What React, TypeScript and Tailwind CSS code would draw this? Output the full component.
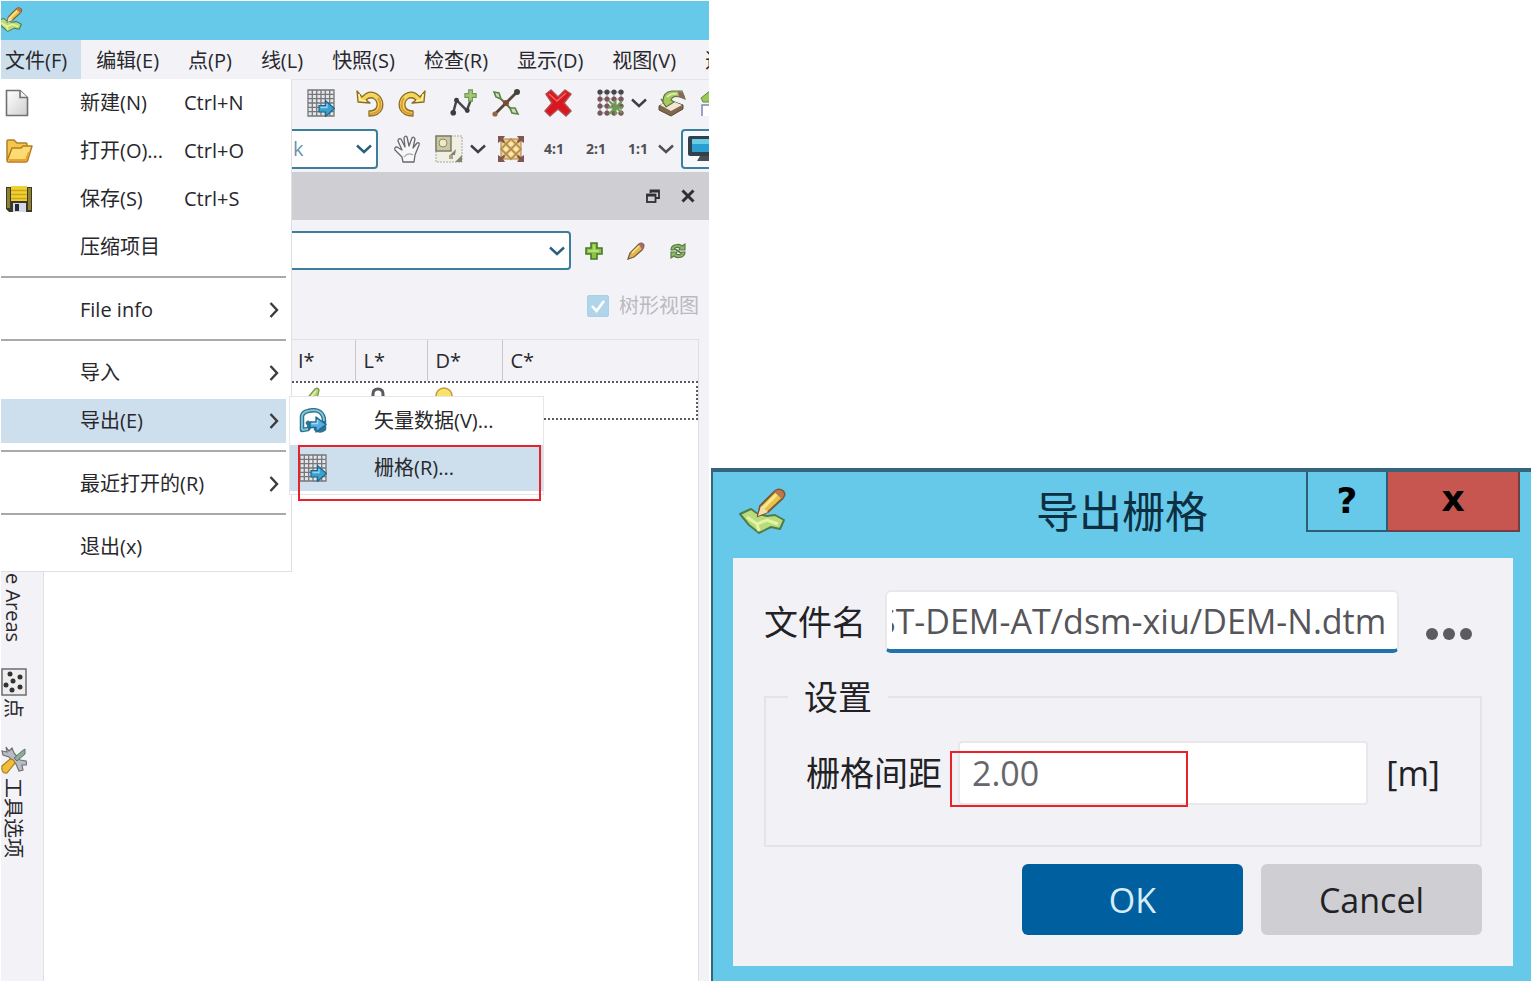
import { useCallback, useState, type ReactNode } from 'react';

type MenuEntry = {
  label: string;
  shortcut?: string;
  icon?: ReactNode;
  submenu?: boolean;
  active?: boolean;
};

const PencilMapIcon = ({ className }: { className?: string }) => (
  <svg viewBox="0 0 48 48" className={className} aria-hidden="true">
    <path d="M1 26 L12 21 L19 26 L28 28 L36 27 L45 32 L41 41 L32 39 L20 45 L10 37 Z" fill="#b9dc7c" stroke="#4f7c4c" strokeWidth="2" strokeLinejoin="round" />
    <path d="M8 29 L18 36 L28 32 L39 36 M20 43 L18 36" fill="none" stroke="#e6f2a4" strokeWidth="3" />
    <path d="M19 28 L21 18 L36 3 Q40 0 44 3 Q47 6 44 10 L29 24 Z" fill="#e9c24a" stroke="#7a5a36" strokeWidth="2" />
    <path d="M24 20 L38 6" stroke="#fae88e" strokeWidth="3" />
    <path d="M35 4 Q40 0 44 4 Q46 7 43 11 Z" fill="#bd7650" />
    <path d="M19 28 L22 18 L29 24 Z" fill="#f4dfae" />
  </svg>
);

const NewFileIcon = () => (
  <svg viewBox="0 0 24 28" className="h-7 w-6" aria-hidden="true">
    <defs>
      <linearGradient id="paper" x1="0" y1="0" x2="1" y2="1">
        <stop offset="0" stopColor="#ffffff" />
        <stop offset="1" stopColor="#cfcfcf" />
      </linearGradient>
    </defs>
    <path d="M1.5 1.5 H15 L22.5 8.5 V26.5 H1.5 Z" fill="url(#paper)" stroke="#707070" strokeWidth="1.6" />
    <path d="M15 1.5 V8.5 H22.5" fill="#f4f4f4" stroke="#707070" strokeWidth="1.6" />
  </svg>
);

const OpenIcon = () => (
  <svg viewBox="0 0 28 26" className="h-[26px] w-7" aria-hidden="true">
    <path d="M2 22 V3 Q2 2 3 2 H9 L12 5 H21 Q22 5 22 6 V10" fill="#f3c64e" stroke="#b0802a" strokeWidth="1.5" />
    <path d="M2 23 L7 10 H16 L18 8 H27 L22.5 23 Q22 24 21 24 H3 Z" fill="#fbdc74" stroke="#b87a1c" strokeWidth="1.5" strokeLinejoin="round" />
    <path d="M4 22 H21 L24 14" fill="none" stroke="#f0a030" strokeWidth="2" />
  </svg>
);

const SaveIcon = () => (
  <svg viewBox="0 0 28 28" className="size-7" aria-hidden="true">
    <path d="M1 2 H27 V27 H4 L1 24 Z" fill="#3c3a26" />
    <path d="M2 3 H5 V23 H2 Z M23 3 H26 V25 H23 Z" fill="#8e8232" />
    <rect x="6" y="1" width="16" height="15" fill="#f0d030" />
    <path d="M6 5.500 H22 M6 9.500 H22 M6 13.500 H22" stroke="#c9a51c" strokeWidth="1.300" />
    <rect x="8" y="18" width="13" height="9" fill="#d5dae8" />
    <rect x="10" y="19" width="4" height="7" fill="#26283a" />
  </svg>
);

const RasterIcon = ({ className }: { className?: string }) => (
  <svg viewBox="0 0 28 28" className={className} aria-hidden="true">
    <rect x="1" y="1" width="26" height="26" fill="#e4e7ea" />
    <path d="M1 1 H27 V27 H1 Z M5.300 1 V27 M9.700 1 V27 M14 1 V27 M18.300 1 V27 M22.700 1 V27 M1 5.300 H27 M1 9.700 H27 M1 14 H27 M1 18.300 H27 M1 22.700 H27" fill="none" stroke="#75777b" strokeWidth="1.300" />
    <path d="M12 16.500 H18.500 V11.500 L27.500 19.500 L18.500 27.500 V23 H12 Z" fill="#3d9fcb" stroke="#1c668c" strokeWidth="1.200" />
    <path d="M13.500 18.500 H20 V15" fill="none" stroke="#8ed4ec" strokeWidth="1.300" />
  </svg>
);

const VectorIcon = () => (
  <svg viewBox="0 0 28 26" className="h-[26px] w-7" aria-hidden="true">
    <path d="M3 22 L3 8 Q4 4 9 3 Q17 1 21 4 Q25 7 25 13 V21 Q21 24 17 21 M3 22 L9 21 Q12 18 9 15" fill="none" stroke="#2f7390" strokeWidth="4.500" strokeLinejoin="round" strokeLinecap="round" />
    <path d="M3 22 L3 8 Q4 4 9 3 Q17 1 21 4 Q25 7 25 13 M3 22 L9 21" fill="none" stroke="#86c6d8" strokeWidth="1.800" strokeLinejoin="round" />
    <path d="M11 14 H17 V9 L27 16.500 L17 24 V19.500 H11 Z" fill="#55aee2" stroke="#1f6792" strokeWidth="1.300" strokeLinejoin="round" />
    <path d="M12.500 15.500 H18.500 V12" fill="none" stroke="#a4dcf4" strokeWidth="1.300" />
  </svg>
);

const TurnIcon = ({ flip }: { flip?: boolean }) => (
  <svg viewBox="0 0 28 28" className={flip ? 'size-7 -scale-x-100' : 'size-7'} aria-hidden="true">
    <path d="M6 8 Q13 0 21 5 Q29 11 26 20 Q23 27 13 27 V22 Q20 22 21 17 Q22 12 17 9 Q13 8 10 11 L14 14 L2 13 L1 2 Z" fill="#f3d75c" stroke="#8b6c25" strokeWidth="1.300" strokeLinejoin="round" />
    <path d="M22 9 Q27 16 22 22 Q19 25 14 25" fill="none" stroke="#df9a34" strokeWidth="2" />
    <path d="M3 5 L4 11 L10 12" fill="none" stroke="#fff3a0" strokeWidth="1.500" />
  </svg>
);

const AddVertexIcon = () => (
  <svg viewBox="0 0 30 30" className="h-[30px] w-7" aria-hidden="true">
    <path d="M3.500 25 L7 12 L18 23 L23 10" fill="none" stroke="#45474b" strokeWidth="2.600" />
    <circle cx="3.500" cy="25.500" r="3" fill="#3b3c42" />
    <circle cx="7" cy="12" r="2.600" fill="#3b3c42" />
    <circle cx="18.500" cy="23" r="2.600" fill="#3b3c42" />
    <path d="M20 1 H24 V5 H28 V9 H24 V13 H20 V9 H16 V5 H20 Z" fill="#a5c878" stroke="#6f9652" strokeWidth="1.200" />
  </svg>
);

const CutIcon = () => (
  <svg viewBox="0 0 28 28" className="size-7" aria-hidden="true">
    <path d="M2 26 L25 3" stroke="#56453a" strokeWidth="2.800" />
    <path d="M9 10 L20 21" stroke="#5d7d40" strokeWidth="2.200" />
    <path d="M2 3 L7 4 L9 10 L4 8 Z M18 19 L23 19 L26 25 L20 24 Z" fill="#cfe0b8" stroke="#5b8344" strokeWidth="1.600" />
    <circle cx="14" cy="14" r="3" fill="#7a4c38" />
    <circle cx="25" cy="3" r="3" fill="#42433b" />
    <circle cx="3" cy="25" r="2.600" fill="#93664a" />
  </svg>
);

const DeleteIcon = () => (
  <svg viewBox="0 0 28 28" className="size-7" aria-hidden="true">
    <path d="M2 5 L7 1 L14 8 L21 1 L27 5 L20 14 L27 22 L22 27 L14 20 L6 27 L1 22 L8 14 Z" fill="#d81720" stroke="#b54a4c" strokeWidth="1.500" strokeLinejoin="round" />
    <path d="M5 5 L13 12 L22 4" fill="none" stroke="#f06a60" strokeWidth="1.600" />
  </svg>
);

const PointGridIcon = () => (
  <svg viewBox="0 0 28 28" className="size-7" aria-hidden="true">
    <path d="M1 3 H27 M1 10 H27 M1 17 H27 M1 24 H27 M3 1 V27 M10 1 V27 M17 1 V27 M24 1 V27" stroke="#a39799" strokeWidth="1.200" />
    {[3, 10, 17, 24].map((y) =>
      [3, 10, 17, 24].map((x) => <circle key={`${x}-${y}`} cx={x} cy={y} r="2.600" fill={y < 6 ? '#49454c' : '#79585c'} />),
    )}
    <path d="M12 12 L25 24 M25 12 L12 25 M18.500 11 V26 M11 18.500 H26" stroke="#6c9a50" strokeWidth="2" />
  </svg>
);

const LayersIcon = () => (
  <svg viewBox="0 0 28 28" className="size-7" aria-hidden="true">
    <path d="M1 17 L11 11 L25 16 L25 20 L13 27 L1 21 Z" fill="#80684b" stroke="#5c4b36" />
    <path d="M2 16 L12 11 L24 16 L13 22 Z" fill="#f0e7d6" />
    <path d="M5 12 Q5 3 14 2 L24 2 L27 10 L22 8 Q15 6 13 11 L16 13 L8 18 L3 10 Z" fill="#a9c765" stroke="#5d7c38" strokeWidth="1.200" />
    <path d="M20 2 Q27 3 27 10 L21 8 Z" fill="#8d6464" />
    <path d="M9 8 Q13 4 19 5" fill="none" stroke="#e0f0b4" strokeWidth="1.500" />
  </svg>
);

const PasteIcon = () => (
  <svg viewBox="0 0 28 28" className="size-7" aria-hidden="true">
    <path d="M1 9 L11 1 L18 9 L13 13 H3 Z" fill="#9cc75a" stroke="#638b3b" />
    <path d="M2 27 V16 H16 V27" fill="#ffffff" stroke="#7c87b4" strokeWidth="1.500" />
  </svg>
);

const HandIcon = () => (
  <svg viewBox="0 0 28 28" className="size-7" aria-hidden="true">
    <path d="M10 27 L9 22 L2 15 Q1 12 4 12 L9 15 L5 6 Q5 3 8 4 L12 12 L11 3 Q12 0 14 2 L16 11 L19 3 Q21 1 22 4 L20 13 L24 8 Q27 7 26 10 L22 20 L21 27 Z" fill="#f7f7f7" stroke="#68696d" strokeWidth="1.300" strokeLinejoin="round" />
    <path d="M11 22 Q15 17 20 20" fill="none" stroke="#a7a7aa" strokeWidth="1.200" />
  </svg>
);

const AreaIcon = () => (
  <svg viewBox="0 0 28 28" className="size-7" aria-hidden="true">
    <rect x="1" y="1" width="26" height="26" fill="#f1efe4" stroke="#aaa99c" strokeDasharray="2 1" />
    <rect x="1" y="1" width="15" height="15" fill="#c8c8a6" stroke="#77775e" strokeWidth="1.400" />
    <circle cx="8" cy="8" r="4" fill="#eeeac8" stroke="#8c8b61" />
    <path d="M15 20 L21 14 L20 20 Z M20 27 L27 20 V27 Z" fill="#87826b" />
    <rect x="14" y="20" width="4" height="4" fill="#a8a586" />
  </svg>
);

const FitIcon = () => (
  <svg viewBox="0 0 28 28" className="size-7" aria-hidden="true">
    <rect x="4" y="4" width="20" height="20" fill="#f0cf8a" stroke="#a3854b" />
    <path d="M5 5 L23 23 M23 5 L5 23 M14 4 L24 14 L14 24 L4 14 Z" fill="none" stroke="#b28b4a" strokeWidth="1.600" />
    <circle cx="14" cy="9" r="2" fill="#fbe9bc" />
    <circle cx="9" cy="14" r="2" fill="#fbe9bc" />
    <circle cx="19" cy="14" r="2" fill="#fbe9bc" />
    <circle cx="14" cy="19" r="2" fill="#fbe9bc" />
    <path d="M1 1 H8 L6 4 L8 7 L6 8 L4 6 L1 8 Z M27 1 V8 L24 6 L21 8 L20 6 L22 4 L20 1 Z M1 27 V20 L4 22 L7 20 L8 22 L6 24 L8 27 Z M27 27 H20 L22 24 L20 22 L21 20 L24 22 L27 20 Z" fill="#80564f" />
  </svg>
);

const MonitorIcon = () => (
  <svg viewBox="0 0 34 28" className="h-7 w-[34px] shrink-0" aria-hidden="true">
    <rect x="1" y="1" width="32" height="20" rx="2" fill="#30414b" />
    <rect x="5" y="4" width="26" height="13" fill="#2ba0d0" />
    <path d="M5 4 H31 V9 H5 Z" fill="#69cde8" />
    <path d="M13 21 H24 L27 26 H10 Z" fill="#4a4d52" />
  </svg>
);

const Chevron = ({ className }: { className?: string }) => (
  <svg viewBox="0 0 18 10" className={`h-[10px] w-[18px] ${className ?? ''}`} aria-hidden="true">
    <path d="M2 1.500 L9 8 L16 1.500" fill="none" stroke="currentColor" strokeWidth="2.400" />
  </svg>
);

const ArrowRight = () => (
  <svg viewBox="0 0 10 18" className="h-[18px] w-[10px]" aria-hidden="true">
    <path d="M1.500 2 L8 9 L1.500 16" fill="none" stroke="#3a3a40" strokeWidth="2.400" />
  </svg>
);

const PlusIcon = () => (
  <svg viewBox="0 0 18 18" className="size-[18px]" aria-hidden="true">
    <path d="M6 1 H12 V6 H17 V12 H12 V17 H6 V12 H1 V6 H6 Z" fill="#8cc444" stroke="#497829" strokeWidth="1.600" />
    <path d="M9 3 V9 H14 M3 9 H9" fill="none" stroke="#c5e886" strokeWidth="1.300" />
  </svg>
);

const PencilIcon = () => (
  <svg viewBox="0 0 18 18" className="size-[18px]" aria-hidden="true">
    <path d="M1 17 L3 11 L12 2 Q15 0 17 3 Q17 6 15 8 L7 15 Z" fill="#e3b748" stroke="#795d43" strokeWidth="1.300" />
    <path d="M5 11 L12 4" stroke="#f9e49a" strokeWidth="1.600" />
    <path d="M12 2 Q15 0 17 3 Q17 6 15 8 Z" fill="#a9696f" />
  </svg>
);

const InkIcon = () => (
  <svg viewBox="0 0 18 18" className="size-[18px]" aria-hidden="true">
    <path d="M1 17 L3 9 L9 2 Q12 0 13 3 L12 8 L7 15 Z" fill="#b6d178" stroke="#7c9a4c" strokeWidth="1.300" />
    <path d="M5 10 L10 4" stroke="#e6f2b8" strokeWidth="1.600" />
  </svg>
);

const RefreshIcon = () => (
  <svg viewBox="0 0 18 18" className="size-[18px]" aria-hidden="true">
    <path d="M2 8 Q2 3 8 2.500 Q11 2 13 4 L16 2 V8 H10 L11 6 Q6 4 5 8 Z" fill="#8fb56a" stroke="#55793f" strokeWidth="1.100" />
    <path d="M16 10 Q16 15 10 15.500 Q7 16 5 14 L2 16 V10 H8 L7 12 Q12 14 13 10 Z" fill="#8fb56a" stroke="#55793f" strokeWidth="1.100" />
    <path d="M6 7 L12 11" stroke="#55793f" strokeWidth="1.600" />
  </svg>
);

const RestoreIcon = () => (
  <svg viewBox="0 0 14 14" className="size-[14px]" aria-hidden="true">
    <path d="M4.500 4 V1.500 H13 V9 H10" fill="none" stroke="#2f3033" strokeWidth="1.800" />
    <rect x="1" y="5.500" width="8.500" height="7.500" fill="none" stroke="#2f3033" strokeWidth="1.800" />
    <path d="M1 6.500 H9.500 M5 2.500 H13" stroke="#2f3033" strokeWidth="1.800" />
  </svg>
);

const CloseIcon = () => (
  <svg viewBox="0 0 14 14" className="size-[14px]" aria-hidden="true">
    <path d="M1.500 1.500 L12.500 12.500 M12.500 1.500 L1.500 12.500" stroke="#2f3033" strokeWidth="3" />
  </svg>
);

const PointsIcon = () => (
  <svg viewBox="0 0 26 28" className="h-7 w-[26px]" aria-hidden="true">
    <rect x="1" y="1" width="24" height="26" fill="#eeeeee" stroke="#6e6e70" strokeWidth="1.500" />
    {[[9, 6], [19, 9], [12, 13], [5, 17], [19, 19], [11, 22]].map(([cx, cy]) => (
      <circle key={`${cx}-${cy}`} cx={cx} cy={cy} r="2.500" fill="#333333" />
    ))}
  </svg>
);

const ToolsIcon = () => (
  <svg viewBox="0 0 26 28" className="h-7 w-[26px]" aria-hidden="true">
    <path d="M5 1 L8 5 L11 2 L13 7 L19 14 L25 15 L26 19 L21 19 L22 24 L18 25 L15 18 L8 11 L2 9 L1 5 L6 6 Z" fill="#b9bcc2" stroke="#6f7278" strokeWidth="1.200" />
    <path d="M13 12 L21 5 L24 3 L24 8 L16 15 Z" fill="#8cab98" stroke="#5d7668" />
    <path d="M1 20 L9 13 Q13 13 14 17 L6 27 Q0 28 1 20 Z" fill="#efbd37" stroke="#a97e24" strokeWidth="1.200" />
  </svg>
);

const menuTitles = ['文件(F)', '编辑(E)', '点(P)', '线(L)', '快照(S)', '检查(R)', '显示(D)', '视图(V)', '选'];

const menuGroups: MenuEntry[][] = [
  [
    { label: '新建(N)', shortcut: 'Ctrl+N', icon: <NewFileIcon /> },
    { label: '打开(O)...', shortcut: 'Ctrl+O', icon: <OpenIcon /> },
    { label: '保存(S)', shortcut: 'Ctrl+S', icon: <SaveIcon /> },
    { label: '压缩项目' },
  ],
  [{ label: 'File info', submenu: true }],
  [
    { label: '导入', submenu: true },
    { label: '导出(E)', submenu: true, active: true },
  ],
  [{ label: '最近打开的(R)', submenu: true }],
  [{ label: '退出(x)' }],
];

function ExportSubmenu() {
  return (
    <div className="absolute -top-px left-[288px] w-[255px] border border-[#e6e6ea] bg-white pb-[3px]">
      <button type="button" className="flex h-12 w-full items-center pl-[9px] text-left">
        <span className="w-[75px]"><VectorIcon /></span>
        矢量数据(V)...
      </button>
      <button type="button" className="flex h-[46px] w-full items-center bg-[#cddfed] pl-[9px] text-left">
        <span className="w-[75px]"><RasterIcon className="size-7" /></span>
        栅格(R)...
      </button>
      <div className="pointer-events-none absolute top-12 right-[2px] left-2 h-14 border-2 border-[#e8222a]" />
    </div>
  );
}

function FileMenu() {
  return (
    <div className="absolute top-full left-0 z-10 w-[291px] border-r border-b border-[#e0e0e4] bg-white">
      {menuGroups.map((group, i) => (
        <div key={i}>
          {i > 0 && <hr className="mt-[5px] mr-[5px] mb-2 border-t-2 border-[#a9a9ab]" />}
          {group.map((entry) => (
            <div key={entry.label} className="relative mr-[5px]">
              <button
                type="button"
                className={`grid h-12 w-full grid-cols-[75px_104px_1fr_auto] items-center border-y-2 border-white pr-[7px] pl-1 text-left whitespace-nowrap ${entry.active ? 'bg-[#cddfed]' : 'bg-white'}`}
              >
                <span>{entry.icon}</span>
                <span>{entry.label}</span>
                <span>{entry.shortcut}</span>
                {entry.submenu && <ArrowRight />}
              </button>
              {entry.active && <ExportSubmenu />}
            </div>
          ))}
        </div>
      ))}
    </div>
  );
}

function Toolbars() {
  return (
    <div className="text-[#3c4046]">
      <div className="flex h-[45px] items-center pl-[306px]">
        <button type="button" aria-label="Raster"><RasterIcon className="size-7" /></button>
        <span className="mr-[9px] ml-3 h-[42px] w-[2px] bg-[#c3c3c8]" />
        <div className="flex gap-[14px]">
          <button type="button" aria-label="Undo"><TurnIcon /></button>
          <button type="button" aria-label="Redo"><TurnIcon flip /></button>
        </div>
        <div className="ml-6 flex items-center gap-[14px]">
          <button type="button" aria-label="Add vertex"><AddVertexIcon /></button>
          <button type="button" aria-label="Cut"><CutIcon /></button>
        </div>
        <button type="button" aria-label="Delete" className="ml-6"><DeleteIcon /></button>
        <button type="button" aria-label="Point grid" className="ml-[25px] flex items-center gap-[5px]">
          <PointGridIcon />
          <Chevron />
        </button>
        <button type="button" aria-label="Layers" className="ml-[10px]"><LayersIcon /></button>
        <button type="button" aria-label="Paste" className="ml-[14px] shrink-0"><PasteIcon /></button>
      </div>

      <div className="flex h-[47px] items-center pl-[276px]">
        <div className="relative">
          <select aria-label="Mode" className="h-10 w-[101px] appearance-none rounded-sm border-2 border-[#3c7f9c] bg-white pl-[14px] text-[#6b93ac]">
            <option>k</option>
          </select>
          <Chevron className="pointer-events-none absolute top-[15px] right-[5px] text-[#2c5f7c]" />
        </div>
        <span className="mr-2 ml-[7px] h-[42px] w-[2px] bg-[#c3c3c8]" />
        <button type="button" aria-label="Pan"><HandIcon /></button>
        <button type="button" aria-label="Select area" className="ml-[14px] flex items-center gap-[6px]">
          <AreaIcon />
          <Chevron />
        </button>
        <button type="button" aria-label="Fit" className="ml-[10px]"><FitIcon /></button>
        <div className="ml-4 flex items-center gap-4 font-['Noto_Sans'] text-sm font-bold text-[#505054]">
          <button type="button" className="w-[26px]">4:1</button>
          <button type="button" className="w-[26px]">2:1</button>
          <button type="button" className="flex items-center gap-[6px]">
            <span className="w-[26px]">1:1</span>
            <Chevron />
          </button>
        </div>
        <button type="button" aria-label="Display" className="ml-[6px] flex h-10 shrink-0 items-center rounded-sm border-2 border-[#3c7f9c] bg-[#f6f9fc] px-1">
          <MonitorIcon />
        </button>
      </div>
    </div>
  );
}

function DockPanel() {
  const [treeView, setTreeView] = useState(true);

  return (
    <section className="flex min-w-0 flex-1 flex-col">
      <header className="flex h-12 items-center justify-end gap-[21px] bg-[#cfcfd3] pr-[14px]">
        <button type="button" aria-label="Float"><RestoreIcon /></button>
        <button type="button" aria-label="Close"><CloseIcon /></button>
      </header>

      <div className="mt-[11px] flex items-center pr-[22px]">
        <div className="relative mr-[14px] flex-1">
          <select aria-label="Layer" className="block h-[39px] w-full appearance-none rounded-sm border-2 border-[#3c7f9c] bg-white">
            <option></option>
          </select>
          <Chevron className="pointer-events-none absolute top-[15px] right-[5px] text-[#2c5f7c]" />
        </div>
        <div className="flex items-center gap-6">
          <button type="button" aria-label="Add"><PlusIcon /></button>
          <button type="button" aria-label="Edit"><PencilIcon /></button>
          <button type="button" aria-label="Refresh"><RefreshIcon /></button>
        </div>
      </div>

      <label className="mt-[21px] mr-[10px] flex h-[30px] items-center justify-end gap-[10px] text-[#bababf]">
        <span className="relative size-[22px]">
          <input
            type="checkbox"
            checked={treeView}
            onChange={(e) => setTreeView(e.target.checked)}
            className="block size-[22px] appearance-none rounded-xs border border-[#a9d0e5] bg-white checked:bg-[#b0d5ea]"
          />
          {treeView && (
            <svg viewBox="0 0 22 22" className="pointer-events-none absolute inset-0" aria-hidden="true">
              <path d="M5 11 L9.500 16 L17 6" fill="none" stroke="#ffffff" strokeWidth="2.600" />
            </svg>
          )}
        </span>
        树形视图
      </label>

      <div className="mt-[18px] mr-[10px] flex-1 border border-b-0 border-[#dfdfe4] bg-white">
        <table className="w-full table-fixed border-collapse">
          <thead>
            <tr className="h-[41px] bg-[#f2f2f7] text-left">
              <th className="w-[246px]" />
              <th className="w-[65px] border-r border-[#c6c6cb] pl-2 font-normal">I*</th>
              <th className="w-[72px] border-r border-[#c6c6cb] pl-2 font-normal">L*</th>
              <th className="w-[75px] border-r border-[#c6c6cb] pl-2 font-normal">D*</th>
              <th className="pl-2 font-normal">C*</th>
            </tr>
          </thead>
          <tbody>
            <tr className="h-[39px] align-top outline-2 -outline-offset-2 outline-dotted outline-[#5a5a5e]">
              <td />
              <td className="pt-[6px] pl-4"><InkIcon /></td>
              <td className="pt-[6px] pl-4">
                <svg viewBox="0 0 14 18" className="h-[18px] w-[14px]" aria-label="locked">
                  <path d="M2 10 V7 Q2 2 7 2 Q12 2 12 7 V10" fill="none" stroke="#5a5a60" strokeWidth="3" />
                  <rect x="0" y="9" width="14" height="9" fill="#86868c" />
                </svg>
              </td>
              <td className="pt-[6px] pl-2">
                <svg viewBox="0 0 18 18" className="size-[18px]" aria-label="visible">
                  <circle cx="9" cy="9" r="8" fill="#f7e36c" stroke="#c09c40" strokeWidth="1.500" />
                </svg>
              </td>
              <td />
            </tr>
          </tbody>
        </table>
      </div>
    </section>
  );
}

function MainWindow() {
  return (
    <main className="relative flex min-w-0 flex-[708] flex-col overflow-hidden bg-[#f2f2f7] text-xl leading-6">
      <div className="h-[39px] bg-[#66c9ea] pt-[6px]">
        <PencilMapIcon className="-ml-1 size-[26px]" />
      </div>

      <nav className="relative border-b border-[#e6e6ea]">
        <div className="-ml-[10px] flex gap-px whitespace-nowrap">
          {menuTitles.map((title, i) => (
            <button key={title} type="button" className={`h-[39px] shrink-0 px-[14px] pt-[2px] ${i === 0 ? 'bg-[#cddfed]' : ''}`}>
              {title}
            </button>
          ))}
        </div>
        <FileMenu />
      </nav>

      <Toolbars />

      <div className="flex flex-1">
        <aside className="flex w-[42px] shrink-0 flex-col pt-[394px]">
          <button type="button" className="h-[76px] w-6 text-right [writing-mode:vertical-rl]">e Areas</button>
          <button type="button" className="mt-[26px]">
            <PointsIcon />
            <span className="block size-6 [text-orientation:sideways] [writing-mode:vertical-rl]">点</span>
          </button>
          <button type="button" className="mt-[26px]">
            <ToolsIcon />
            <span className="block w-6 pt-1 [text-orientation:sideways] [writing-mode:vertical-rl]">工具选项</span>
          </button>
        </aside>
        <DockPanel />
      </div>
    </main>
  );
}

function ExportDialog() {
  const [fileName, setFileName] = useState('ST-DEM-AT/dsm-xiu/DEM-N.dtm');
  const [spacing, setSpacing] = useState('2.00');

  // long paths show their end
  const scrollToEnd = useCallback((el: HTMLInputElement | null) => {
    if (el) el.scrollLeft = el.scrollWidth;
  }, []);

  return (
    <div role="dialog" aria-labelledby="dialog-title" className="border-t-4 border-l-2 border-[#35657c] bg-[#66c9ea] pb-[15px]">
      <div className="grid h-[86px] grid-cols-[1fr_auto_1fr] text-[#0d2f42]">
        <div className="pt-4 pl-[26px]"><PencilMapIcon className="size-12" /></div>
        <h2 id="dialog-title" className="pt-4 text-[43px] leading-[48px]">导出栅格</h2>
        <div className="mr-[11px] flex h-[60px] justify-end font-['DejaVu_Sans'] text-4xl font-bold text-black">
          <button type="button" aria-label="Help" className="w-[82px] border-2 border-t-0 border-[#2b5f78]">?</button>
          <button type="button" aria-label="Close" className="w-[132px] border-2 border-t-0 border-l-0 border-[#733f45] bg-[#c75650] pb-1">x</button>
        </div>
      </div>

      <form onSubmit={(e) => e.preventDefault()} className="mr-[18px] ml-5 bg-[#f2f2f6] px-[31px] pt-8 pb-[31px] text-[34px] leading-10 text-[#222226]">
        <div className="flex items-center">
          <label htmlFor="file-name" className="mr-[19px] shrink-0">文件名</label>
          <input
            id="file-name"
            ref={scrollToEnd}
            value={fileName}
            onChange={(e) => setFileName(e.target.value)}
            className="h-[63px] min-w-0 flex-1 rounded-md border-2 border-b-4 border-[#e8e8ec] border-b-[#1f74ad] bg-white pr-[11px] pl-[5px] text-[#55555a] outline-none"
          />
          <button type="button" aria-label="Browse" className="mt-6 mr-[10px] ml-[27px] flex gap-[5px]">
            <span className="size-3 rounded-full bg-[#5c5c60]" />
            <span className="size-3 rounded-full bg-[#5c5c60]" />
            <span className="size-3 rounded-full bg-[#5c5c60]" />
          </button>
        </div>

        <fieldset className="mt-6 border-2 border-[#e3e3e8] pt-6 pb-10">
          <legend className="ml-[22px] px-4">设置</legend>
          <div className="flex items-center pr-10 pl-10">
            <label htmlFor="grid-spacing" className="mr-4 shrink-0">栅格间距</label>
            <div className="relative min-w-0 flex-1">
              <input
                id="grid-spacing"
                value={spacing}
                onChange={(e) => setSpacing(e.target.value)}
                className="block h-16 w-full rounded-sm border-2 border-[#e8e8ec] bg-white px-3 text-[#66666b] outline-none"
              />
              <div className="pointer-events-none absolute top-[10px] -left-2 h-14 w-[238px] border-2 border-[#e8222a]" />
            </div>
            <span className="ml-[18px]">[m]</span>
          </div>
        </fieldset>

        <div className="mt-[17px] flex justify-end gap-[18px]">
          <button type="submit" className="h-[71px] w-[221px] rounded-md bg-[#00609f] text-[#d8edfa]">OK</button>
          <button type="button" className="h-[71px] w-[221px] rounded-md bg-[#cfcfd3]">Cancel</button>
        </div>
      </form>
    </div>
  );
}

export default function App() {
  return (
    <div className="flex min-h-screen gap-[2px] bg-white pt-px pr-[2px] pb-[2px] pl-px font-['Open_Sans','Noto_Sans_CJK_SC',sans-serif] text-[#28282c]">
      <MainWindow />
      <div className="flex min-w-0 flex-[820] flex-col justify-end">
        <ExportDialog />
      </div>
    </div>
  );
}
